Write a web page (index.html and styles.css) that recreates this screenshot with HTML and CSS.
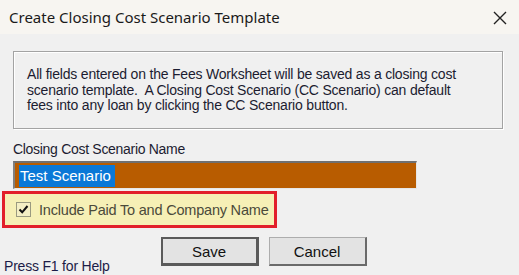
FILE: index.html
```html
<!DOCTYPE html>
<html lang="en">
<head>
  <meta charset="UTF-8">
  <meta name="viewport" content="width=device-width, initial-scale=1.0">
  <title>Create Closing Cost Scenario Template</title>
  <link rel="stylesheet" href="styles.css">
</head>
<body>
  <div class="window">
    <header class="titlebar">
      <span class="title">Create Closing Cost Scenario Template</span>
      <svg class="close" width="14" height="14" viewBox="0 0 14 14">
        <path d="M1 1 L13 13 M13 1 L1 13" stroke="#222" stroke-width="1.4" fill="none"/>
      </svg>
    </header>
    <main class="content">
      <div class="note">
        All fields entered on the Fees Worksheet will be saved as a closing cost<br>
        scenario template.&nbsp; A Closing Cost Scenario (CC Scenario) can default<br>
        fees into any loan by clicking the CC Scenario button.
      </div>
      <div class="field-label">Closing Cost Scenario Name</div>
      <div class="textbox">
        <span class="selected">Test Scenario&nbsp;</span>
      </div>
      <div class="highlight">
        <span class="checkbox">
          <svg width="11" height="11" viewBox="0 0 11 11">
            <path d="M1.5 5.5 L4.2 8.3 L9.5 2" stroke="#111" stroke-width="2" fill="none"/>
          </svg>
        </span>
        <span class="check-label">Include Paid To and Company Name</span>
      </div>
      <div class="footer">
        <span class="help">Press F1 for Help</span>
        <div class="buttons">
          <button class="btn default">Save</button>
          <button class="btn">Cancel</button>
        </div>
      </div>
    </main>
  </div>
</body>
</html>
```

FILE: styles.css
```css
* {
  margin: 0;
  padding: 0;
  box-sizing: border-box;
}
body {
  width: 519px;
  height: 275px;
  overflow: hidden;
  background-color: #f0f0f0;
  font-family: "Liberation Sans", Arial, sans-serif;
  color: #1c1c30;
}
.titlebar {
  display: flex;
  align-items: center;
  height: 34px;
  padding: 0 12px 0 9px;
  background-color: #f7f5f1;
}
.title {
  margin-right: auto;
  font-family: "Noto Sans", "Open Sans", sans-serif;
  font-size: 15px;
  color: #1a1a1a;
}
.close {
  margin-top: 2px;
}
.content {
  padding: 17px 0 0 13px;
}
.note {
  width: 490px;
  height: 78px;
  padding: 15px 0 0 13px;
  border: 1px solid #a3a3a3;
  box-shadow: inset 1px 1px 0 #fff, 1px 1px 0 #fff;
  font-size: 14px;
  line-height: 15.5px;
  letter-spacing: -0.2px;
  white-space: nowrap;
}
.field-label {
  margin-top: 11px;
  font-size: 14px;
  line-height: 18px;
  letter-spacing: -0.3px;
}
.textbox {
  display: flex;
  align-items: center;
  width: 404px;
  height: 28px;
  margin-top: 3px;
  padding-left: 4px;
  background-color: #b85c00;
  border-top: 2px solid #707070;
  border-left: 2px solid #808080;
  border-right: 1px solid #e6e6e6;
  border-bottom: 1px solid #e6e6e6;
}
.selected {
  padding: 2px 0 2px 1px;
  background-color: #0a78d7;
  color: #fff;
  font-size: 15px;
  line-height: 18px;
}
.highlight {
  display: flex;
  align-items: center;
  gap: 8px;
  width: 275px;
  height: 37px;
  margin: 2px 0 0 -11px;
  padding-left: 11px;
  background-color: #f6f0b6;
  border: 3px solid #e2202b;
}
.checkbox {
  display: flex;
  align-items: center;
  justify-content: center;
  width: 15px;
  height: 15px;
  background-color: #f4efc4;
  border: 1px solid #9a9a80;
}
.check-label {
  font-size: 14.5px;
  color: #4b4a3a;
  letter-spacing: -0.2px;
}
.footer {
  display: flex;
  align-items: flex-start;
  margin-left: -9px;
}
.help {
  margin-top: 30px;
  font-size: 14px;
  letter-spacing: -0.2px;
  color: #1c1c48;
}
.buttons {
  display: flex;
  gap: 10px;
  margin: 9px 0 0 51px;
}
.btn {
  width: 98px;
  height: 29px;
  font-family: "Liberation Sans", Arial, sans-serif;
  font-size: 15px;
  color: #111;
  background-color: #e3e3e3;
  border: 1px solid #adadad;
  border-right: 2px solid #6a6a6a;
  border-bottom: 2px solid #6a6a6a;
}
.btn.default {
  border: 2px solid #5a5a5a;
  border-right-width: 3px;
  border-bottom-width: 3px;
}
```
